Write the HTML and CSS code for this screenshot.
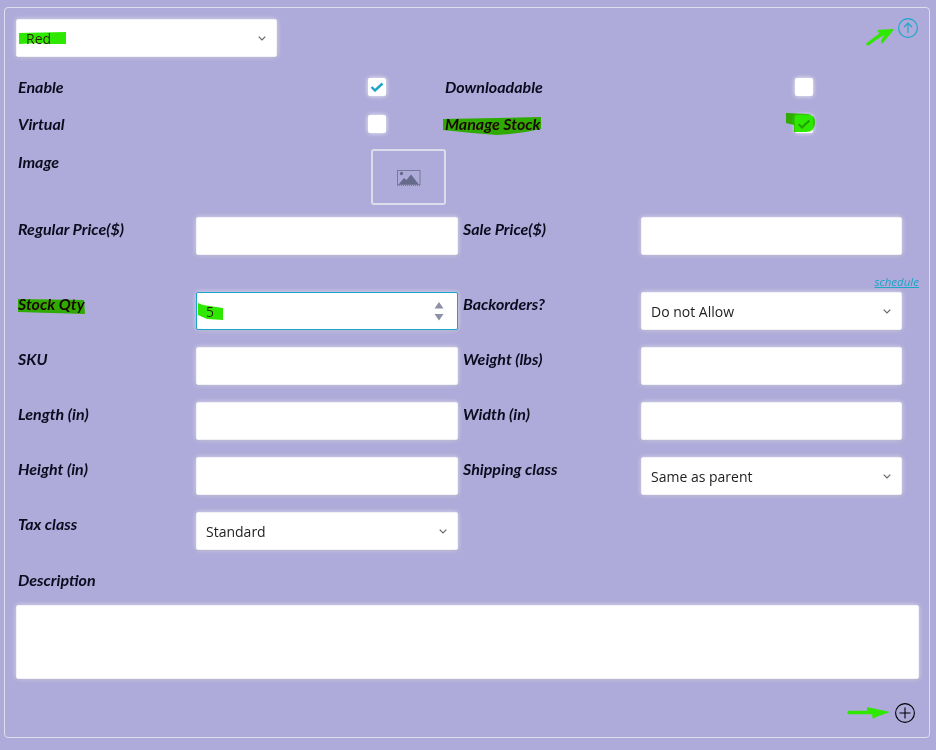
FILE: index.html
```html
<!DOCTYPE html>
<html lang="en">
<head>
<meta charset="utf-8">
<title>Variation</title>
<link rel="stylesheet" href="styles.css">
</head>
<body>
<form class="panel">
  <div class="top-row">
    <div class="select-wrap select-wide">
      <select class="control select"><option>Red</option></select>
      <svg class="chevron" width="8" height="5" viewBox="0 0 8 5"><path d="M.7.7L4 4 7.300.7"/></svg>
    </div>
    <svg class="round-icon up-icon" width="20" height="20" viewBox="0 0 20 20"><circle cx="10" cy="10" r="9.4"/><path d="M10 15V5M6 9l4-4 4 4"/></svg>
  </div>

  <div class="check-row check-row-first">
    <span class="label">Enable</span>
    <label class="checkbox"><svg width="14" height="10" viewBox="0 0 14 10"><path d="M1.5 5l3.500 3.500L12.500 1.500"/></svg></label>
    <span></span>
    <span class="label label-flush">Downloadable</span>
    <label class="checkbox"></label>
  </div>
  <div class="check-row check-row-second">
    <span class="label">Virtual</span>
    <label class="checkbox"></label>
    <span></span>
    <span class="label label-flush">Manage Stock</span>
    <label class="checkbox"><svg width="14" height="10" viewBox="0 0 14 10"><path d="M1.5 5l3.500 3.500L12.500 1.500"/></svg></label>
  </div>

  <div class="image-row">
    <span class="label">Image</span>
    <div class="image-box">
      <svg class="image-icon" width="24" height="16" viewBox="0 0 24 16"><rect class="image-frame" x=".5" y=".5" width="22.500" height="14"/><circle class="image-fill" cx="4.500" cy="3.500" r="1.700"/><path class="image-fill" d="M2 14l5-6 2.500 2L14 4.500 21.500 14z"/><path class="image-dots" d="M0 15.500h24"/></svg>
    </div>
  </div>

  <div class="field-row field-row-price">
    <span class="label">Regular Price($)</span>
    <input class="control" type="text">
    <span class="label label-flush">Sale Price($)</span>
    <input class="control" type="text">
  </div>

  <div class="schedule-row"><a class="schedule" href="#">schedule</a></div>

  <div class="field-row">
    <span class="label">Stock Qty</span>
    <div class="select-wrap">
      <input class="control control-focus" type="text" value="5">
      <svg class="stepper" width="10" height="19" viewBox="0 0 10 19"><path d="M5 0l4.500 6.500H.5zM.5 12h9L5 18.500z"/></svg>
    </div>
    <span class="label label-flush">Backorders?</span>
    <div class="select-wrap">
      <select class="control select"><option>Do not Allow</option></select>
      <svg class="chevron" width="8" height="5" viewBox="0 0 8 5"><path d="M.7.7L4 4 7.300.7"/></svg>
    </div>
  </div>

  <div class="field-row">
    <span class="label">SKU</span>
    <input class="control" type="text">
    <span class="label label-flush">Weight (lbs)</span>
    <input class="control" type="text">
  </div>

  <div class="field-row">
    <span class="label">Length (in)</span>
    <input class="control" type="text">
    <span class="label label-flush">Width (in)</span>
    <input class="control" type="text">
  </div>

  <div class="field-row">
    <span class="label">Height (in)</span>
    <input class="control" type="text">
    <span class="label label-flush">Shipping class</span>
    <div class="select-wrap">
      <select class="control select"><option>Same as parent</option></select>
      <svg class="chevron" width="8" height="5" viewBox="0 0 8 5"><path d="M.7.7L4 4 7.300.7"/></svg>
    </div>
  </div>

  <div class="field-row">
    <span class="label">Tax class</span>
    <div class="select-wrap">
      <select class="control select"><option>Standard</option></select>
      <svg class="chevron" width="8" height="5" viewBox="0 0 8 5"><path d="M.7.7L4 4 7.300.7"/></svg>
    </div>
  </div>

  <div class="description">
    <span class="label">Description</span>
    <textarea class="control textarea"></textarea>
  </div>

  <div class="bottom-row">
    <svg class="round-icon plus-icon" width="20" height="20" viewBox="0 0 20 20"><circle cx="10" cy="10" r="9.400"/><path d="M10 4.500v11M4.500 10h11"/></svg>
  </div>
</form>

<svg class="annotations" width="936" height="750" viewBox="0 0 936 750">
  <path class="mark" d="M19 33l47-1v12l-20 0-6-1-21 1z"/>
  <path class="mark" d="M443 119l98-2v12q-22 5-44 6-28-2-54-5z"/>
  <path class="mark" d="M786 113l22 1q7 1 7 8 0 10-9 10h-12v-7l-8-2z"/>
  <path class="mark" d="M18 299l66 1 1 14-67-2z"/>
  <path class="mark" d="M198 303l5 2 20 3v12l-16-1-9-4z"/>
  <path class="arrow" d="M868 44l8-6 6-4"/>
  <path class="arrow-head" d="M877 30l17-1-2 3-10 12-1-3 3-6-3 1z"/>
  <path class="arrow" d="M849 712.500h24"/>
  <path class="arrow-head" d="M867 707l23 5-14 5-3 2-1-4 2-2-7-1z"/>
</svg>
</body>
</html>
```

FILE: styles.css
```css
* {
  box-sizing: border-box;
}

html,
body {
  margin: 0;
  background: #aeaad9;
}

body {
  position: relative;
  width: 936px;
  height: 750px;
  padding: 7px 0 0 4px;
  overflow: hidden;
  font-family: "Open Sans", "Noto Sans", sans-serif;
  color: #111;
}

.panel {
  width: 926px;
  height: 731px;
  padding: 11px 10px 0 11px;
  border: 1px solid #dedeee;
  border-radius: 4px;
}

.top-row {
  display: flex;
  justify-content: space-between;
  align-items: flex-start;
}

.select-wrap {
  position: relative;
  display: flex;
}

.select-wide {
  width: 261px;
}

.control {
  width: 100%;
  height: 38px;
  padding: 0 30px 0 9px;
  border: 1px solid #f2f2f6;
  border-radius: 2px;
  background: #fff;
  box-shadow: 0 0 5px rgba(255, 255, 255, 0.6), 0 1px 2px rgba(120, 120, 140, 0.3);
  font: 14px "Open Sans", "Noto Sans", sans-serif;
  color: #222;
  outline: none;
}

.select {
  appearance: none;
}

.control-focus {
  border-color: #1ba5c8;
}

.chevron {
  position: absolute;
  right: 11px;
  top: 17px;
  fill: none;
  stroke: #666;
  stroke-width: 1.2;
}

.stepper {
  position: absolute;
  right: 14px;
  top: 10px;
  fill: #8e8fa8;
}

.round-icon {
  fill: none;
  stroke-width: 1.1;
}

.up-icon {
  margin: -1px 1px 0 0;
  stroke: #1ba5c8;
}

.plus-icon {
  stroke: #000;
}

.check-row {
  display: grid;
  grid-template-columns: 352px 18px 59px 350px 18px;
  align-items: center;
  height: 18px;
}

.check-row-first {
  margin-top: 20px;
}

.check-row-second {
  margin-top: 19px;
}

.label {
  padding-left: 2px;
  font: italic 700 16px/20px Lato, "Open Sans", sans-serif;
  color: #0b0b1e;
}

.label-flush {
  padding-left: 0;
}

.checkbox {
  display: flex;
  align-items: center;
  justify-content: center;
  width: 18px;
  height: 18px;
  border-radius: 2px;
  background: #fff;
  box-shadow: 0 0 5px rgba(255, 255, 255, 0.85);
}

.checkbox svg {
  fill: none;
  stroke: #1ba5c8;
  stroke-width: 2.4;
}

.image-row {
  display: grid;
  grid-template-columns: 355px 75px;
  margin-top: 17px;
}

.image-row .label {
  padding-top: 3px;
}

.image-box {
  display: flex;
  align-items: center;
  justify-content: center;
  height: 56px;
  border: 2px solid #dcdcea;
  border-radius: 3px;
}

.image-icon {
  margin-top: 2px;
}

.image-frame {
  fill: none;
  stroke: #777b98;
}

.image-fill {
  fill: #666b8c;
}

.image-dots {
  fill: none;
  stroke: #777b98;
  stroke-dasharray: 1 1;
}

.field-row {
  display: grid;
  grid-template-columns: 180px 262px 183px 261px;
  margin-top: 17px;
}

.field-row .label {
  padding-top: 2px;
}

.field-row .label-flush {
  margin-left: 5px;
}

.field-row-price {
  margin-top: 12px;
}

.schedule-row {
  height: 16px;
  margin-top: 19px;
  margin-bottom: -15px;
  text-align: right;
  font: italic 11.5px/16px "Open Sans", "Noto Sans", sans-serif;
}

.schedule {
  color: #1ba5c8;
}

.description {
  margin-top: 20px;
}

.description .label {
  display: block;
}

.textarea {
  display: block;
  width: 903px;
  height: 74px;
  margin-top: 15px;
  padding: 8px 10px;
  resize: none;
}

.bottom-row {
  display: flex;
  justify-content: flex-end;
  margin-top: 24px;
  padding-right: 4px;
}

.annotations {
  position: absolute;
  top: 0;
  left: 0;
  pointer-events: none;
}

.mark {
  fill: #2ee800;
  mix-blend-mode: darken;
}

.arrow {
  fill: none;
  stroke: #2ee800;
  stroke-width: 3.4;
  stroke-linecap: round;
  stroke-linejoin: round;
}

.arrow-head {
  fill: #2ee800;
}
```
